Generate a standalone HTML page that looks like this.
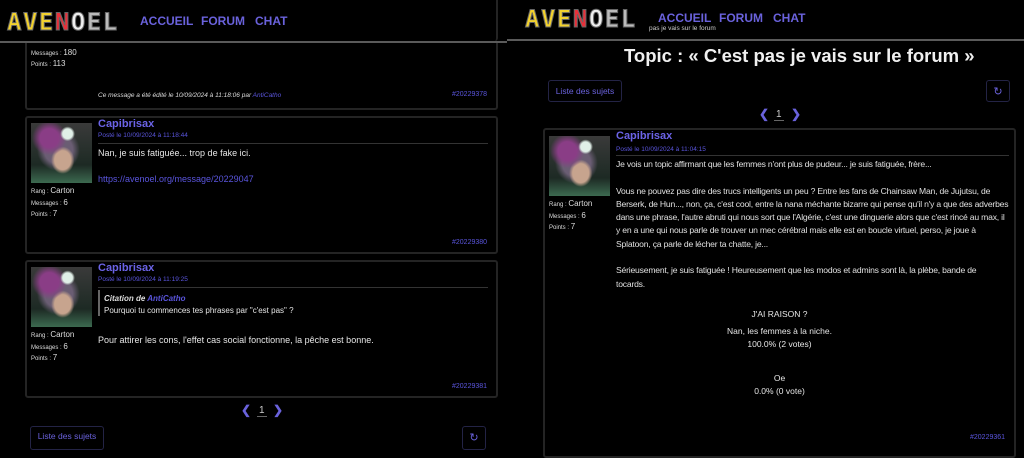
<!DOCTYPE html>
<html><head><meta charset="utf-8">
<style>
*{margin:0;padding:0;box-sizing:border-box}
html,body{width:1024px;height:443px}
body{background:#000;overflow:hidden;position:relative;font-family:"Liberation Sans",Arial,sans-serif;color:#e6e6e6;font-size:10px}
.a{position:absolute;white-space:nowrap}
.card{position:absolute;border:2px solid #242424;border-radius:3px}
.name{color:#6b63e6;font-size:11px;font-weight:bold}
.date{color:#5a55dd;font-size:6.5px}
.lk{color:#5a55dd}
.sm{font-size:6px;color:#ddd}
.sm b{font-size:8px;font-weight:normal}
.av{position:absolute;width:61px;height:60px;background:
radial-gradient(circle at 60% 18%,#e0efe8 0 8%,transparent 12%),
radial-gradient(circle at 30% 25%,#8a3d86 0 15%,transparent 28%),
radial-gradient(ellipse at 52% 62%,#c7a48e 0 18%,transparent 26%),
radial-gradient(ellipse at 45% 45%,#6a5d73 0 30%,transparent 45%),
linear-gradient(180deg,#3a3a3a,#1d2a24 70%,#3c6a50);}
.hline{position:absolute;height:2px;background:#5a5a5a}
.nav{position:absolute;color:#6a62dc;font-size:12px;font-weight:bold}
.logo{position:absolute;font-family:"DejaVu Sans Mono",monospace;font-weight:bold;font-size:24px;letter-spacing:1.5px;line-height:24px;-webkit-text-stroke:1px #666}
.btn{position:absolute;border:1.5px solid #232345;border-radius:3px;color:#6a62dc;font-size:8.5px;text-align:center}
.pg{position:absolute;color:#6a62dc;font-size:10px}
.body{font-size:8.6px;line-height:13.3px;color:#e0e0e0;letter-spacing:-0.2px}
</style></head><body>

<!-- LEFT PANE -->
<div class="a" style="left:133px;top:-4px;font-size:9px;color:#ddd">tu commences tes phrases par "c'est pas" ?</div>
<div class="card" style="left:25px;top:-10px;width:473px;height:120px"></div>
<div class="a sm" style="left:31px;top:48px">Messages : <b>180</b></div>
<div class="a sm" style="left:31px;top:59px">Points : <b>113</b></div>
<div class="a" style="left:98px;top:92px;font-size:6.5px;font-style:italic;color:#ddd">Ce message a été édité le 10/09/2024 à 11:18:06 par <span class="lk">AntiCatho</span></div>
<div class="a lk" style="left:452px;top:91px;font-size:7px">#20229378</div>
<div style="position:absolute;left:0;top:0;width:507px;height:41px;background:#000"></div>
<div class="card" style="left:25px;top:-10px;width:473px;height:51px;border-top:none;border-bottom:none;border-left:none"></div>
<div class="logo" style="left:7px;top:10px"><span style="color:#f3d22e">AVE</span><span style="color:#e8303a">N</span><span style="color:#eee">O</span><span style="color:#bbb">EL</span></div>
<div class="nav" style="left:140px;top:14px">ACCUEIL</div>
<div class="nav" style="left:201px;top:14px">FORUM</div>
<div class="nav" style="left:255px;top:14px">CHAT</div>
<div class="hline" style="left:0;top:41px;width:507px"></div>

<div class="card" style="left:25px;top:116px;width:473px;height:138px"></div>
<div class="av" style="left:31px;top:123px"></div>
<div class="a name" style="left:98px;top:118px">Capibrisax</div>
<div class="a date" style="left:98px;top:132px">Posté le 10/09/2024 à 11:18:44</div>
<div class="a" style="left:98px;top:143px;width:390px;height:1px;background:#333"></div>
<div class="a" style="left:98px;top:148px;font-size:9px">Nan, je suis fatiguée... trop de fake ici.</div>
<div class="a lk" style="left:98px;top:174px;font-size:9px">https://avenoel.org/message/20229047</div>
<div class="a sm" style="left:31px;top:186px">Rang : <b>Carton</b></div>
<div class="a sm" style="left:31px;top:198px">Messages : <b>6</b></div>
<div class="a sm" style="left:31px;top:209px">Points : <b>7</b></div>
<div class="a lk" style="left:452px;top:239px;font-size:7px">#20229380</div>

<div class="card" style="left:25px;top:260px;width:473px;height:138px"></div>
<div class="av" style="left:31px;top:267px"></div>
<div class="a name" style="left:98px;top:262px">Capibrisax</div>
<div class="a date" style="left:98px;top:276px">Posté le 10/09/2024 à 11:19:25</div>
<div class="a" style="left:98px;top:287px;width:390px;height:1px;background:#333"></div>
<div class="a" style="left:98px;top:290px;width:2px;height:26px;background:#666"></div>
<div class="a" style="left:104px;top:294px;font-size:8px;font-style:italic;font-weight:bold;color:#ddd">Citation de <span class="lk">AntiCatho</span></div>
<div class="a" style="left:104px;top:306px;font-size:8px">Pourquoi tu commences tes phrases par "c'est pas" ?</div>
<div class="a" style="left:98px;top:335px;font-size:9px">Pour attirer les cons, l'effet cas social fonctionne, la pêche est bonne.</div>
<div class="a sm" style="left:31px;top:330px">Rang : <b>Carton</b></div>
<div class="a sm" style="left:31px;top:342px">Messages : <b>6</b></div>
<div class="a sm" style="left:31px;top:353px">Points : <b>7</b></div>
<div class="a lk" style="left:452px;top:383px;font-size:7px">#20229381</div>

<div class="pg" style="left:241px;top:403px;font-weight:bold;font-size:12px">&#10094;</div>
<div class="pg" style="left:257px;top:405px;color:#ccc;border-bottom:1px solid #666;padding:0 2px">1</div>
<div class="pg" style="left:273px;top:403px;font-weight:bold;font-size:12px">&#10095;</div>
<div class="btn" style="left:30px;top:426px;width:74px;height:24px;padding-top:4px">Liste des sujets</div>
<div class="btn" style="left:462px;top:426px;width:24px;height:24px;padding-top:4px;font-size:11px">&#8635;</div>

<!-- RIGHT PANE -->
<div class="logo" style="left:525px;top:7px"><span style="color:#f3d22e">AVE</span><span style="color:#e8303a">N</span><span style="color:#eee">O</span><span style="color:#bbb">EL</span></div>
<div class="nav" style="left:658px;top:11px">ACCUEIL</div>
<div class="nav" style="left:719px;top:11px">FORUM</div>
<div class="nav" style="left:773px;top:11px">CHAT</div>
<div class="a" style="left:649px;top:25px;font-size:6.5px;color:#ccc">pas je vais sur le forum</div>
<div class="hline" style="left:507px;top:39px;width:517px"></div>
<div class="a" style="left:624px;top:45px;font-size:18.5px;font-weight:bold;color:#f0f0f0">Topic : « C'est pas je vais sur le forum »</div>
<div class="btn" style="left:548px;top:80px;width:74px;height:22px;padding-top:5px">Liste des sujets</div>
<div class="btn" style="left:986px;top:80px;width:24px;height:22px;padding-top:4px;font-size:11px">&#8635;</div>
<div class="pg" style="left:759px;top:107px;font-weight:bold;font-size:12px">&#10094;</div>
<div class="pg" style="left:774px;top:109px;color:#ccc;border-bottom:1px solid #666;padding:0 2px">1</div>
<div class="pg" style="left:791px;top:107px;font-weight:bold;font-size:12px">&#10095;</div>

<div class="card" style="left:543px;top:128px;width:473px;height:330px"></div>
<div class="av" style="left:549px;top:136px"></div>
<div class="a name" style="left:616px;top:130px">Capibrisax</div>
<div class="a date" style="left:616px;top:146px">Posté le 10/09/2024 à 11:04:15</div>
<div class="a" style="left:616px;top:155px;width:393px;height:1px;background:#333"></div>
<div class="a sm" style="left:549px;top:199px">Rang : <b>Carton</b></div>
<div class="a sm" style="left:549px;top:211px">Messages : <b>6</b></div>
<div class="a sm" style="left:549px;top:222px">Points : <b>7</b></div>
<div class="a body" style="left:616px;top:158px">Je vois un topic affirmant que les femmes n'ont plus de pudeur... je suis fatiguée, frère...<br><br>Vous ne pouvez pas dire des trucs intelligents un peu ? Entre les fans de Chainsaw Man, de Jujutsu, de<br>Berserk, de Hun..., non, ça, c'est cool, entre la nana méchante bizarre qui pense qu'il n'y a que des adverbes<br>dans une phrase, l'autre abruti qui nous sort que l'Algérie, c'est une dinguerie alors que c'est rincé au max, il<br>y en a une qui nous parle de trouver un mec cérébral mais elle est en boucle virtuel, perso, je joue à<br>Splatoon, ça parle de lécher ta chatte, je...<br><br>Sérieusement, je suis fatiguée ! Heureusement que les modos et admins sont là, la plèbe, bande de<br>tocards.</div>
<div class="a" style="left:616px;top:308px;width:327px;text-align:center;font-size:8.5px;line-height:13px">J'AI RAISON ?</div>
<div class="a" style="left:616px;top:325px;width:327px;text-align:center;font-size:8.5px;line-height:13px">Nan, les femmes à la niche.<br>100.0% (2 votes)</div>
<div class="a" style="left:616px;top:372px;width:327px;text-align:center;font-size:8.5px;line-height:13px">Oe<br>0.0% (0 vote)</div>
<div class="a lk" style="left:970px;top:434px;font-size:7px">#20229361</div>
</body></html>
